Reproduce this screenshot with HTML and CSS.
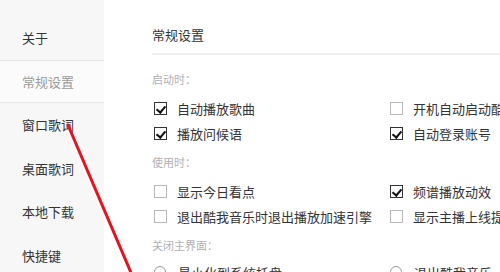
FILE: index.html
```html
<!DOCTYPE html>
<html lang="zh-CN">
<head>
<meta charset="utf-8">
<title>常规设置</title>
<link rel="stylesheet" href="styles.css">
</head>
<body>
<div class="app">
  <nav class="sidebar">
    <div class="nav-item">关于</div>
    <div class="nav-item active">常规设置</div>
    <div class="nav-item">窗口歌词</div>
    <div class="nav-item">桌面歌词</div>
    <div class="nav-item">本地下载</div>
    <div class="nav-item">快捷键</div>
  </nav>
  <main class="content">
    <div class="header"><span class="title">常规设置</span></div>
    <div class="label">启动时：</div>
    <div class="grid">
      <div class="opt"><span class="cb on"></span>自动播放歌曲</div>
      <div class="opt"><span class="cb"></span>开机自动启动酷我音乐</div>
      <div class="opt"><span class="cb on"></span>播放问候语</div>
      <div class="opt"><span class="cb on"></span>自动登录账号</div>
    </div>
    <div class="label">使用时：</div>
    <div class="grid">
      <div class="opt"><span class="cb"></span>显示今日看点</div>
      <div class="opt"><span class="cb on"></span>频谱播放动效</div>
      <div class="opt"><span class="cb"></span>退出酷我音乐时退出播放加速引擎</div>
      <div class="opt"><span class="cb"></span>显示主播上线提醒</div>
    </div>
    <div class="label">关闭主界面：</div>
    <div class="grid radios">
      <div class="opt"><span class="rd"></span>最小化到系统托盘</div>
      <div class="opt"><span class="rd"></span>退出酷我音乐</div>
    </div>
  </main>
  <svg class="arrow" width="500" height="272" viewBox="0 0 500 272">
    <line x1="68" y1="125" x2="132" y2="275" stroke="#e01520" stroke-width="3" stroke-linecap="round"/>
  </svg>
</div>
</body>
</html>
```
FILE: styles.css
```css
* { box-sizing: border-box; }
html, body {
  margin: 0;
  padding: 0;
  width: 500px;
  height: 272px;
  overflow: hidden;
  background: #fff;
  font-family: "Noto Sans CJK SC", "Noto Sans", sans-serif;
  color: #333;
}
.app {
  position: relative;
  display: flex;
  width: 500px;
  height: 272px;
  overflow: hidden;
}
.sidebar {
  flex: 0 0 104px;
  background: #f7f7f7;
  padding-top: 16px;
}
.nav-item {
  height: 43.5px;
  display: flex;
  align-items: center;
  padding-left: 22px;
  font-size: 13px;
  color: #333;
}
.nav-item.active {
  background: #fbfbfb;
  color: #9a9a9a;
  border-top: 1px solid #e6e6e6;
  border-bottom: 1px solid #e6e6e6;
}
.content {
  flex: 1;
  padding-left: 48px;
  min-width: 0;
}
.header {
  height: 55px;
  border-bottom: 2px solid #efefef;
  display: flex;
  align-items: center;
  padding-top: 16px;
  padding-bottom: 0;
}
.header { align-items: flex-start; padding-top: 26px; }
.title {
  font-size: 13px;
  line-height: 18px;
  color: #333;
}
.label {
  font-size: 11px;
  line-height: 16px;
  color: #b0b0b0;
  margin-top: 16px;
  margin-bottom: 9px;
}
.grid + .label { margin-top: 8px; }
.grid {
  display: grid;
  grid-template-columns: 236px 1fr;
  padding-left: 2px;
}
.opt {
  height: 25px;
  display: flex;
  align-items: center;
  font-size: 13px;
  color: #333;
  white-space: nowrap;
}
.cb {
  flex: 0 0 13px;
  width: 13px;
  height: 13px;
  border: 1px solid #b8b8b8;
  background: #fff;
  margin-right: 10px;
  position: relative;
}
.cb.on {
  border-color: #333;
}
.cb.on::after {
  content: "";
  position: absolute;
  left: 3px;
  top: 1px;
  width: 4px;
  height: 7px;
  border-right: 2px solid #111;
  border-bottom: 2px solid #111;
  transform: rotate(40deg);
}
.rd {
  flex: 0 0 12px;
  width: 12px;
  height: 12px;
  border: 1px solid #999;
  border-radius: 50%;
  margin-right: 12px;
}
.radios .opt { height: 20px; }
.arrow {
  position: absolute;
  left: 0;
  top: 0;
  pointer-events: none;
}
```
